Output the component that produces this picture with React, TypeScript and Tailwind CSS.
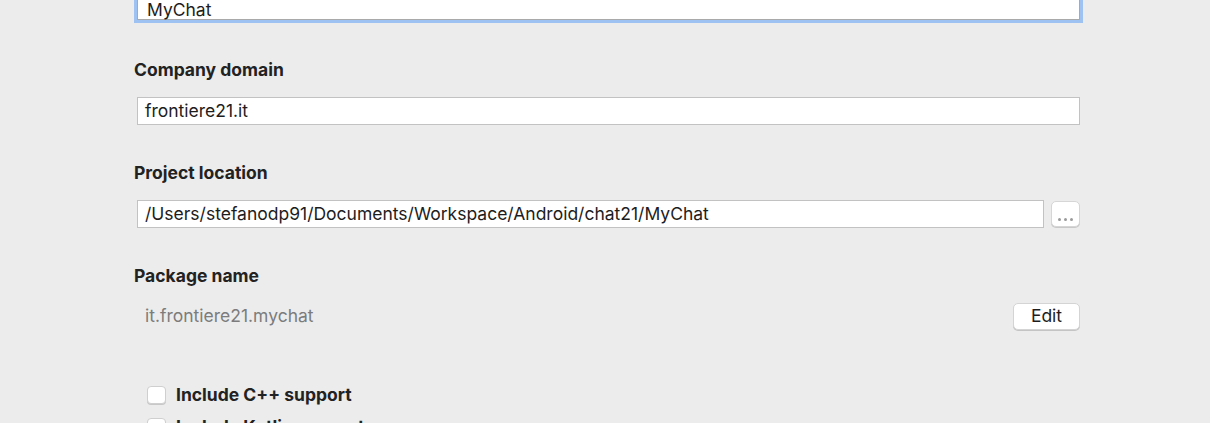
import React from "react";

const font = { fontFamily: "Inter, 'Liberation Sans', sans-serif" };

function Label({ children }: { children: React.ReactNode }) {
  return (
    <div className="h-5 text-[17.5px] leading-5 font-bold text-[#222]">
      {children}
    </div>
  );
}

export default function App() {
  return (
    <div
      className="w-[1210px] h-[423px] overflow-hidden bg-[#ececec]"
      style={font}
    >
      <div className="pl-[134px] w-[1080px]">
        {/* app name (focused) */}
        <div className="-mt-2 ml-[3px] h-7 bg-white border border-[#a9a9a9] shadow-[0_0_0_3px_#9ec3f2] flex items-center pt-2 pl-[9px] text-[17.5px] text-[#1d1d1d]">
          MyChat
        </div>

        <div className="mt-10">
          <Label>Company domain</Label>
        </div>
        <div className="mt-[17px] ml-[3px] h-7 bg-white border border-[#c2c2c2] flex items-center pl-[7px] text-[17.5px] text-[#1d1d1d]">
          frontiere21.it
        </div>

        <div className="mt-[38px]">
          <Label>Project location</Label>
        </div>
        <div className="mt-[17px] ml-[3px] flex gap-[7px]">
          <div className="flex-1 h-7 bg-white border border-[#c2c2c2] flex items-center pl-[7px] text-[17.5px] text-[#1d1d1d]">
            /Users/stefanodp91/Documents/Workspace/Android/chat21/MyChat
          </div>
          <button className="mt-px w-[29px] h-[26px] bg-white rounded-[5px] border border-[#d6d6d6] shadow-[0_1px_0_#c8c8c8] flex items-end justify-center pb-[5px] gap-[3px]">
            <span className="w-[3px] h-[3px] rounded-full bg-[#9a9a9a]" />
            <span className="w-[3px] h-[3px] rounded-full bg-[#9a9a9a]" />
            <span className="w-[3px] h-[3px] rounded-full bg-[#9a9a9a]" />
          </button>
        </div>

        <div className="mt-[38px]">
          <Label>Package name</Label>
        </div>
        <div className="mt-[17px] h-[27px] flex items-center justify-between">
          <span className="pl-[11px] text-[17.5px] text-[#7c7c7c]">
            it.frontiere21.mychat
          </span>
          <button className="w-[67px] h-[27px] bg-white rounded-[5px] border border-[#d4d4d4] shadow-[0_1px_0_#c4c4c4] text-[17.5px] text-[#1d1d1d] flex items-center justify-center">
            Edit
          </button>
        </div>

        <div className="mt-[55px] pl-[13px] flex flex-col gap-[12px]">
          <label className="flex items-center h-5 gap-[10px]">
            <span className="w-[19px] h-[18px] bg-white rounded-[4px] border border-[#cfcfcf] shadow-[0_1px_0_#c8c8c8]" />
            <span className="text-[17.5px] font-bold text-[#222]">
              Include C++ support
            </span>
          </label>
          <label className="flex items-center h-5 gap-[10px]">
            <span className="w-[19px] h-[18px] bg-white rounded-[4px] border border-[#cfcfcf] shadow-[0_1px_0_#c8c8c8]" />
            <span className="text-[17.5px] font-bold text-[#222]">
              Include Kotlin support
            </span>
          </label>
        </div>
      </div>
    </div>
  );
}
